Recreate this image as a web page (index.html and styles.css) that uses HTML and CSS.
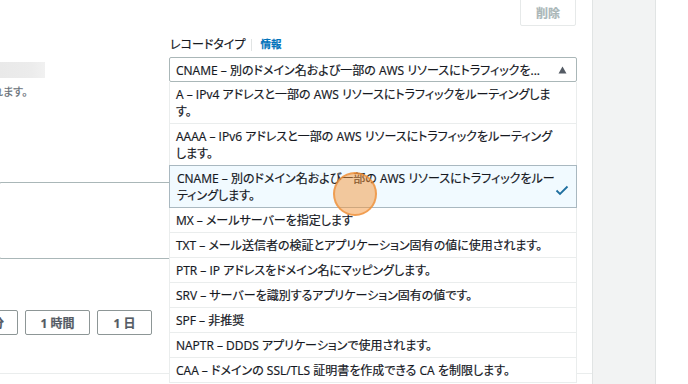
FILE: index.html
```html
<!DOCTYPE html>
<html lang="ja">
<head>
    <meta charset="UTF-8">
    <title>レコードの作成</title>
    <link rel="stylesheet" href="styles.css">
</head>
<body>

    <div class="layout">
        <div class="main">
            <!-- 上部の操作 -->
            <div class="toolbar">
                <button class="btn-delete" type="button" disabled>削除</button>
            </div>

            <div class="record">
                <div class="name-col">
                    <div class="name-input"></div>
                    <p class="hint">れます。</p>
                </div>
                <div class="type-col">
                    <div class="field-label">
                        <span>レコードタイプ</span>
                        <span class="sep"></span>
                        <a class="info" href="#">情報</a>
                    </div>
                    <div class="select">
                        <span class="select-text">CNAME – 別のドメイン名および一部の AWS リソースにトラフィックを...</span>
                        <svg class="caret" width="9" height="8" viewBox="0 0 9 8"><polygon points="4.5,0.5 8.5,7.5 0.5,7.5" fill="#545b64"/></svg>
                    </div>
                </div>
            </div>

            <div class="value-box"></div>

            <div class="ttl-buttons">
                <button type="button" class="ttl ttl-cut">1 分</button>
                <button type="button" class="ttl ttl-wide">1 時間</button>
                <button type="button" class="ttl">1 日</button>
            </div>

            <div class="divider"></div>

            <!-- ドロップダウン -->
            <ul class="dropdown">
                <li class="tall">A – IPv4 アドレスと一部の AWS リソースにトラフィックをルーティングします。</li>
                <li class="tall">AAAA – IPv6 アドレスと一部の AWS リソースにトラフィックをルーティングします。</li>
                <li class="tall selected">CNAME – 別のドメイン名および一部の AWS リソースにトラフィックをルーティングします。
                    <svg class="check" width="14" height="11" viewBox="0 0 14 11"><polyline points="1.5,5.5 5,9 12.5,1.5" fill="none" stroke="#1f6f9f" stroke-width="1.8"/></svg>
                </li>
                <li>MX – メールサーバーを指定します</li>
                <li>TXT – メール送信者の検証とアプリケーション固有の値に使用されます。</li>
                <li>PTR – IP アドレスをドメイン名にマッピングします。</li>
                <li>SRV – サーバーを識別するアプリケーション固有の値です。</li>
                <li>SPF – 非推奨</li>
                <li>NAPTR – DDDS アプリケーションで使用されます。</li>
                <li>CAA – ドメインの SSL/TLS 証明書を作成できる CA を制限します。</li>
            </ul>

            <div class="cursor"></div>
        </div>
        <div class="side"></div>
    </div>

</body>
</html>
```

FILE: styles.css
```css
body {
    margin: 0;
    width: 688px;
    height: 384px;
    overflow: hidden;
    background: #ffffff;
    font-family: 'Open Sans', 'Noto Sans CJK JP', sans-serif;
    font-size: 12px;
    color: #16191f;
    font-feature-settings: "palt";
    -webkit-text-stroke: 0.2px currentColor;
}
.layout {
    display: flex;
    height: 384px;
}
.main {
    position: relative;
    width: 592px;
    flex: none;
}
.side {
    width: 62px;
    background: #f2f3f3;
    border-left: 1px solid #e1e4e4;
    border-right: 1px solid #e1e4e4;
}
.toolbar {
    display: flex;
    justify-content: flex-end;
    padding-right: 16px;
}
.btn-delete {
    margin-top: -2px;
    width: 56px;
    height: 28px;
    padding-top: 2px;
    background: #ffffff;
    border: 1px solid #e6e9e9;
    border-radius: 2px;
    color: #aab7b8;
    font-family: inherit;
    font-size: 12px;
    font-weight: bold;
}
.record {
    display: flex;
    margin-top: 10px;
}
.name-col {
    width: 169px;
    flex: none;
    overflow: hidden;
}
.name-input {
    margin-top: 26px;
    width: 45px;
    height: 16px;
    background: linear-gradient(90deg, #e9e9e9, #ececec 70%, #f1f1f1);
}
.hint {
    margin: 6px 0 0 -8px;
    font-size: 11px;
    line-height: 15px;
    color: #687078;
}
.type-col {
    width: 408px;
}
.field-label {
    display: flex;
    align-items: center;
    height: 17px;
    line-height: 17px;
    padding-left: 1px;
}
.sep {
    width: 1px;
    height: 12px;
    background: #e1e4e4;
    margin: 0 8px 0 6px;
}
.info {
    color: #0073bb;
    font-size: 10.5px;
    font-weight: bold;
    text-decoration: none;
}
.select {
    display: flex;
    align-items: center;
    justify-content: space-between;
    margin-top: 4px;
    height: 23px;
    border: 1px solid #aab7b8;
    border-radius: 2px;
    padding: 0 9px 0 6px;
}
.select-text {
    white-space: nowrap;
}
.caret {
    display: block;
}
.value-box {
    margin: 83px 0 0 -1px;
    width: 576px;
    height: 75px;
    border: 1px solid #aab7b8;
    border-radius: 2px;
}
.ttl-buttons {
    display: flex;
    gap: 7px;
    margin: 51px 0 0 -37px;
}
.ttl {
    width: 55px;
    height: 25px;
    background: #ffffff;
    border: 1px solid #8d9696;
    border-radius: 2px;
    color: #545b64;
    font-family: inherit;
    font-size: 12px;
    font-weight: bold;
    padding: 0;
}
.ttl-cut {
    text-align: right;
    padding-right: 13px;
}
.ttl-wide {
    width: 65px;
}
.divider {
    margin-top: 38px;
    height: 1px;
    background: #eaeded;
}
.dropdown {
    position: absolute;
    top: 82px;
    left: 169px;
    width: 406px;
    margin: 0;
    padding: 0;
    list-style: none;
    background: #ffffff;
    border-left: 1px solid #eaeded;
    border-right: 1px solid #eaeded;
}
.dropdown li {
    position: relative;
    padding: 4px 19px 3px 6px;
    line-height: 17px;
    border-bottom: 1px solid #eaeded;
}
.dropdown li.selected {
    background: #f1faff;
    border: 1px solid #a9b8c0;
    margin: -1px -1px 0 -1px;
    padding-left: 7px;
}
.check {
    position: absolute;
    right: 7px;
    top: 19px;
}
.cursor {
    position: absolute;
    left: 333px;
    top: 172px;
    width: 40px;
    height: 40px;
    border-radius: 50%;
    background: rgba(244, 150, 60, 0.5);
    border: 2px solid rgba(238, 140, 50, 0.7);
}
```
